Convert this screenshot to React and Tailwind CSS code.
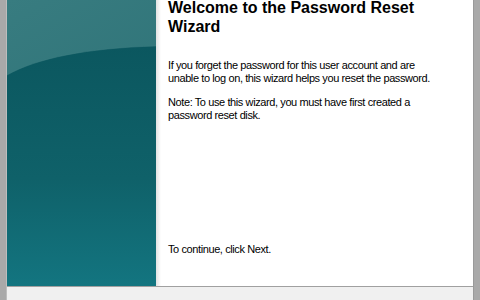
import React from "react";

function SidePanel() {
  return (
    <svg width="149" height="286" viewBox="0 0 149 286" className="block">
      <defs>
        <linearGradient id="topGlow" x1="0" y1="0" x2="0.3" y2="1">
          <stop offset="0" stopColor="#387c80" />
          <stop offset="1" stopColor="#2a6f74" />
        </linearGradient>
        <linearGradient id="deep" x1="0" y1="0" x2="0" y2="1">
          <stop offset="0" stopColor="#0b575f" />
          <stop offset="0.55" stopColor="#0f6169" />
          <stop offset="1" stopColor="#137580" />
        </linearGradient>
      </defs>
      <rect width="149" height="286" fill="url(#topGlow)" />
      <path d="M0,75 C30,58 80,48 149,46 L149,286 L0,286 Z" fill="url(#deep)" />
      <path d="M0,75 C30,58 80,48 149,46" fill="none" stroke="#3f8084" strokeWidth="1" opacity="0.5" />
    </svg>
  );
}

export default function App() {
  return (
    <div className="w-[480px] h-[300px] flex bg-[#f0f0f0] overflow-hidden" style={{ fontFamily: '"Liberation Sans", Arial, sans-serif' }}>
      <div className="w-[7px] h-full bg-[#a9a9a9] border-r border-[#bdbdbd]" />
      <div className="flex-1 flex flex-col">
        <div className="h-[286px] flex">
          <SidePanel />
          <div className="flex-1 bg-[linear-gradient(to_right,#e2e2e2,#ffffff_5px)] pl-[12px] text-black">
            <h1 className="mt-[-2px] text-[16px] leading-[19px] font-bold whitespace-nowrap">
              Welcome to the Password Reset
              <br />
              Wizard
            </h1>
            <p className="mt-[23px] text-[11px] leading-[13px] tracking-[-0.4px] whitespace-nowrap">
              If you forget the password for this user account and are
              <br />
              unable to log on, this wizard helps you reset the password.
            </p>
            <p className="mt-[11px] text-[11px] leading-[13px] tracking-[-0.4px] whitespace-nowrap">
              Note: To use this wizard, you must have first created a
              <br />
              password reset disk.
            </p>
            <p className="mt-[121px] text-[11px] leading-[13px] tracking-[-0.4px] whitespace-nowrap">
              To continue, click Next.
            </p>
          </div>
        </div>
        <div className="flex-1 border-t border-[#a0a0a0] bg-[#f0f0f0]" />
      </div>
      <div className="w-[7px] h-full bg-[#a9a9a9] border-l border-[#9a9a9a]" />
    </div>
  );
}
